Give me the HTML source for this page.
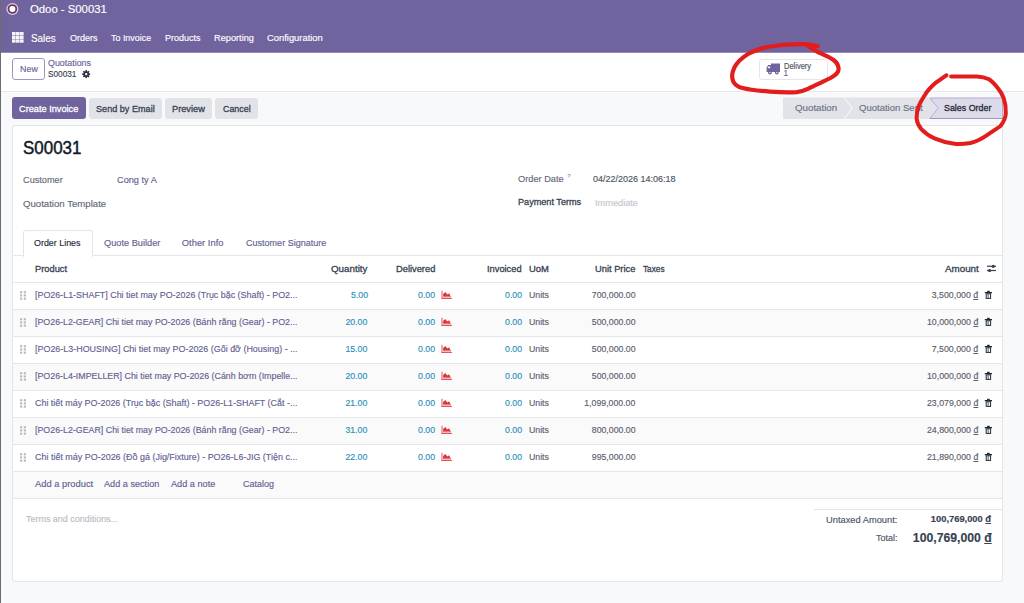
<!DOCTYPE html>
<html><head><meta charset="utf-8">
<style>
html,body{margin:0;padding:0;}
body{width:1024px;height:603px;overflow:hidden;position:relative;background:#f8f9fb;font-family:"Liberation Sans",sans-serif;}
.a{position:absolute;}
.t{position:absolute;white-space:nowrap;line-height:1;-webkit-text-stroke-width:0.15px;}
.hl{position:absolute;height:1px;background:#e4e6ea;}
</style></head><body>
<!-- top bar -->
<div class="a" style="left:0;top:0;width:1024px;height:52px;background:#71639e;"></div><div class="a" style="left:0;top:52px;width:1024px;height:1px;background:#948bba;"></div>
<div class="a" style="left:0;top:0;width:1px;height:603px;background:#6c6c70;"></div>
<svg class="a" style="left:0;top:0" width="30" height="20"><circle cx="12.4" cy="9" r="6.0" fill="#ddd5e8"/><circle cx="12.4" cy="9" r="4.8" fill="#6e3a5e"/><circle cx="12.4" cy="9" r="3.0" fill="#fff"/></svg>
<svg class="a" style="left:12px;top:32px" width="12" height="11"><g fill="#f6f4f9"><rect x="0" y="0" width="3.6" height="3.3"/><rect x="4.0" y="0" width="3.6" height="3.3"/><rect x="8.0" y="0" width="3.6" height="3.3"/><rect x="0" y="3.7" width="3.6" height="3.3"/><rect x="4.0" y="3.7" width="3.6" height="3.3"/><rect x="8.0" y="3.7" width="3.6" height="3.3"/><rect x="0" y="7.4" width="3.6" height="3.3"/><rect x="4.0" y="7.4" width="3.6" height="3.3"/><rect x="8.0" y="7.4" width="3.6" height="3.3"/></g></svg>
<!-- control panel -->
<div class="a" style="left:1px;top:53px;width:1023px;height:38px;background:#ffffff;"></div>
<div class="hl" style="left:1px;top:91px;width:1023px;background:#e5e7eb;"></div>
<div class="a" style="left:12px;top:58px;width:31px;height:20px;border:1px solid #9f95c4;border-radius:3px;background:#fff;"></div>
<svg class="a" style="left:81px;top:69px" width="10" height="10" viewBox="0 0 10 10"><g transform="translate(5.2 5.1)" fill="#2d3440">
<circle r="2.9"/>
<rect x="-0.8" y="-4" width="1.6" height="8"/><rect x="-0.8" y="-4" width="1.6" height="8" transform="rotate(45)"/><rect x="-0.8" y="-4" width="1.6" height="8" transform="rotate(90)"/><rect x="-0.8" y="-4" width="1.6" height="8" transform="rotate(135)"/>
<circle r="1.2" fill="#fff"/></g></svg>
<div class="a" style="left:759px;top:58.6px;width:66.5px;height:19.4px;border:1px solid #e3e5e9;border-radius:3px;background:#fff;"></div>
<svg class="a" style="left:766px;top:63px" width="15" height="12" viewBox="0 0 15 12"><g fill="#71639e">
<rect x="5" y="0.5" width="9" height="8.5"/><path d="M0.6 9 V4.5 L2.2 2 H5.2 V9 Z"/>
<circle cx="3.9" cy="9.6" r="1.9"/><circle cx="10.8" cy="9.6" r="1.9"/></g>
<rect x="1.8" y="3.6" width="2.4" height="1.6" fill="#fff"/><circle cx="3.9" cy="9.6" r="0.7" fill="#fff"/><circle cx="10.8" cy="9.6" r="0.7" fill="#fff"/></svg>
<!-- action buttons -->
<div class="a" style="left:12px;top:97px;width:74px;height:22px;background:#71639e;border-radius:3px;"></div>
<div class="a" style="left:88.5px;top:97.5px;width:73px;height:21.5px;background:#e1e3e8;border-radius:3px;"></div>
<div class="a" style="left:165px;top:97.5px;width:47px;height:21.5px;background:#e1e3e8;border-radius:3px;"></div>
<div class="a" style="left:215px;top:97.5px;width:43px;height:21.5px;background:#e1e3e8;border-radius:3px;"></div>
<!-- status bar -->
<svg class="a" style="left:780px;top:95px" width="244" height="27" viewBox="780 95 244 27">
<path d="M783 97.5 H843.4 L851.7 108.2 L843.4 119 H783 Z" fill="#e1e3e8"/>
<path d="M844.6 97.5 H929.4 L937.6 108.2 L929.4 119 H844.6 L852.9 108.2 Z" fill="#e1e3e8"/>
<path d="M929.9 98 H1002.5 V118.5 H929.9 L938.2 108.2 Z" fill="#dddaea" stroke="#b3acd4" stroke-width="1"/><line x1="929.9" y1="118.5" x2="1002.5" y2="118.5" stroke="#9d94c6" stroke-width="1"/>
</svg>
<!-- sheet -->
<div class="a" style="left:11.5px;top:125px;width:989.5px;height:454.8px;background:#fff;border:1px solid #e3e5e9;border-radius:3px;"></div>
<!-- tabs -->
<div class="hl" style="left:13px;top:255px;width:989px;"></div>
<div class="a" style="left:23px;top:230px;width:67.5px;height:26px;border:1px solid #e3e5e9;border-bottom:none;border-radius:3px 3px 0 0;background:#fff;"></div>
<!-- table rows -->
<div class="hl" style="left:13px;top:281.5px;width:989px;"></div>
<div class="a" style="left:13px;top:309px;width:989px;height:27px;background:#fafafb;"></div>
<div class="a" style="left:13px;top:363px;width:989px;height:27px;background:#fafafb;"></div>
<div class="a" style="left:13px;top:417px;width:989px;height:27px;background:#fafafb;"></div>
<div class="a" style="left:13px;top:471px;width:989px;height:27px;background:#fafafb;"></div>
<div class="hl" style="left:13px;top:309px;width:989px;"></div>
<div class="hl" style="left:13px;top:336px;width:989px;"></div>
<div class="hl" style="left:13px;top:363px;width:989px;"></div>
<div class="hl" style="left:13px;top:390px;width:989px;"></div>
<div class="hl" style="left:13px;top:417px;width:989px;"></div>
<div class="hl" style="left:13px;top:444px;width:989px;"></div>
<div class="hl" style="left:13px;top:471px;width:989px;"></div>
<div class="hl" style="left:13px;top:498px;width:989px;"></div>
<div class="hl" style="left:814px;top:508.5px;width:188px;"></div>
<svg class="a" style="left:0;top:0" width="1024" height="603" viewBox="0 0 1024 603"><g transform="translate(20 291.0)"><g fill="#b3b7bf"><rect x="0.1" y="0.2" width="2.1" height="2.1"/><rect x="3.8" y="0.2" width="2.1" height="2.1"/><rect x="0.1" y="3.4" width="2.1" height="2.1"/><rect x="3.8" y="3.4" width="2.1" height="2.1"/><rect x="0.1" y="6.6" width="2.1" height="2.1"/><rect x="3.8" y="6.6" width="2.1" height="2.1"/></g></g>
<g transform="translate(441.5 290.8)"><g><rect x="0" y="0" width="1" height="8.2" fill="#e0555c"/><rect x="0" y="7.2" width="10.4" height="1" fill="#e0555c"/><path d="M1.6 6.4 L1.6 3.2 L3.8 1.2 L5.8 3.6 L7.6 2.4 L9.6 6.4 Z" fill="#d9363e"/><rect x="1.6" y="5.6" width="8.2" height="1" fill="#f0a0a4"/></g></g>
<g transform="translate(984.8 290.8)"><g><rect x="0" y="1.2" width="7.2" height="1.3" fill="#1f2937"/><rect x="2.3" y="0" width="2.6" height="1.4" fill="#1f2937"/><rect x="1.4" y="3" width="4.4" height="4.6" fill="none" stroke="#1f2937" stroke-width="1"/><rect x="2.9" y="3.4" width="0.8" height="3.8" fill="#374151"/><rect x="3.6" y="3.4" width="0.1" height="3.8" fill="#374151"/></g></g>
<g transform="translate(20 318.0)"><g fill="#b3b7bf"><rect x="0.1" y="0.2" width="2.1" height="2.1"/><rect x="3.8" y="0.2" width="2.1" height="2.1"/><rect x="0.1" y="3.4" width="2.1" height="2.1"/><rect x="3.8" y="3.4" width="2.1" height="2.1"/><rect x="0.1" y="6.6" width="2.1" height="2.1"/><rect x="3.8" y="6.6" width="2.1" height="2.1"/></g></g>
<g transform="translate(441.5 317.8)"><g><rect x="0" y="0" width="1" height="8.2" fill="#e0555c"/><rect x="0" y="7.2" width="10.4" height="1" fill="#e0555c"/><path d="M1.6 6.4 L1.6 3.2 L3.8 1.2 L5.8 3.6 L7.6 2.4 L9.6 6.4 Z" fill="#d9363e"/><rect x="1.6" y="5.6" width="8.2" height="1" fill="#f0a0a4"/></g></g>
<g transform="translate(984.8 317.8)"><g><rect x="0" y="1.2" width="7.2" height="1.3" fill="#1f2937"/><rect x="2.3" y="0" width="2.6" height="1.4" fill="#1f2937"/><rect x="1.4" y="3" width="4.4" height="4.6" fill="none" stroke="#1f2937" stroke-width="1"/><rect x="2.9" y="3.4" width="0.8" height="3.8" fill="#374151"/><rect x="3.6" y="3.4" width="0.1" height="3.8" fill="#374151"/></g></g>
<g transform="translate(20 345.0)"><g fill="#b3b7bf"><rect x="0.1" y="0.2" width="2.1" height="2.1"/><rect x="3.8" y="0.2" width="2.1" height="2.1"/><rect x="0.1" y="3.4" width="2.1" height="2.1"/><rect x="3.8" y="3.4" width="2.1" height="2.1"/><rect x="0.1" y="6.6" width="2.1" height="2.1"/><rect x="3.8" y="6.6" width="2.1" height="2.1"/></g></g>
<g transform="translate(441.5 344.8)"><g><rect x="0" y="0" width="1" height="8.2" fill="#e0555c"/><rect x="0" y="7.2" width="10.4" height="1" fill="#e0555c"/><path d="M1.6 6.4 L1.6 3.2 L3.8 1.2 L5.8 3.6 L7.6 2.4 L9.6 6.4 Z" fill="#d9363e"/><rect x="1.6" y="5.6" width="8.2" height="1" fill="#f0a0a4"/></g></g>
<g transform="translate(984.8 344.8)"><g><rect x="0" y="1.2" width="7.2" height="1.3" fill="#1f2937"/><rect x="2.3" y="0" width="2.6" height="1.4" fill="#1f2937"/><rect x="1.4" y="3" width="4.4" height="4.6" fill="none" stroke="#1f2937" stroke-width="1"/><rect x="2.9" y="3.4" width="0.8" height="3.8" fill="#374151"/><rect x="3.6" y="3.4" width="0.1" height="3.8" fill="#374151"/></g></g>
<g transform="translate(20 372.0)"><g fill="#b3b7bf"><rect x="0.1" y="0.2" width="2.1" height="2.1"/><rect x="3.8" y="0.2" width="2.1" height="2.1"/><rect x="0.1" y="3.4" width="2.1" height="2.1"/><rect x="3.8" y="3.4" width="2.1" height="2.1"/><rect x="0.1" y="6.6" width="2.1" height="2.1"/><rect x="3.8" y="6.6" width="2.1" height="2.1"/></g></g>
<g transform="translate(441.5 371.8)"><g><rect x="0" y="0" width="1" height="8.2" fill="#e0555c"/><rect x="0" y="7.2" width="10.4" height="1" fill="#e0555c"/><path d="M1.6 6.4 L1.6 3.2 L3.8 1.2 L5.8 3.6 L7.6 2.4 L9.6 6.4 Z" fill="#d9363e"/><rect x="1.6" y="5.6" width="8.2" height="1" fill="#f0a0a4"/></g></g>
<g transform="translate(984.8 371.8)"><g><rect x="0" y="1.2" width="7.2" height="1.3" fill="#1f2937"/><rect x="2.3" y="0" width="2.6" height="1.4" fill="#1f2937"/><rect x="1.4" y="3" width="4.4" height="4.6" fill="none" stroke="#1f2937" stroke-width="1"/><rect x="2.9" y="3.4" width="0.8" height="3.8" fill="#374151"/><rect x="3.6" y="3.4" width="0.1" height="3.8" fill="#374151"/></g></g>
<g transform="translate(20 399.0)"><g fill="#b3b7bf"><rect x="0.1" y="0.2" width="2.1" height="2.1"/><rect x="3.8" y="0.2" width="2.1" height="2.1"/><rect x="0.1" y="3.4" width="2.1" height="2.1"/><rect x="3.8" y="3.4" width="2.1" height="2.1"/><rect x="0.1" y="6.6" width="2.1" height="2.1"/><rect x="3.8" y="6.6" width="2.1" height="2.1"/></g></g>
<g transform="translate(441.5 398.8)"><g><rect x="0" y="0" width="1" height="8.2" fill="#e0555c"/><rect x="0" y="7.2" width="10.4" height="1" fill="#e0555c"/><path d="M1.6 6.4 L1.6 3.2 L3.8 1.2 L5.8 3.6 L7.6 2.4 L9.6 6.4 Z" fill="#d9363e"/><rect x="1.6" y="5.6" width="8.2" height="1" fill="#f0a0a4"/></g></g>
<g transform="translate(984.8 398.8)"><g><rect x="0" y="1.2" width="7.2" height="1.3" fill="#1f2937"/><rect x="2.3" y="0" width="2.6" height="1.4" fill="#1f2937"/><rect x="1.4" y="3" width="4.4" height="4.6" fill="none" stroke="#1f2937" stroke-width="1"/><rect x="2.9" y="3.4" width="0.8" height="3.8" fill="#374151"/><rect x="3.6" y="3.4" width="0.1" height="3.8" fill="#374151"/></g></g>
<g transform="translate(20 426.0)"><g fill="#b3b7bf"><rect x="0.1" y="0.2" width="2.1" height="2.1"/><rect x="3.8" y="0.2" width="2.1" height="2.1"/><rect x="0.1" y="3.4" width="2.1" height="2.1"/><rect x="3.8" y="3.4" width="2.1" height="2.1"/><rect x="0.1" y="6.6" width="2.1" height="2.1"/><rect x="3.8" y="6.6" width="2.1" height="2.1"/></g></g>
<g transform="translate(441.5 425.8)"><g><rect x="0" y="0" width="1" height="8.2" fill="#e0555c"/><rect x="0" y="7.2" width="10.4" height="1" fill="#e0555c"/><path d="M1.6 6.4 L1.6 3.2 L3.8 1.2 L5.8 3.6 L7.6 2.4 L9.6 6.4 Z" fill="#d9363e"/><rect x="1.6" y="5.6" width="8.2" height="1" fill="#f0a0a4"/></g></g>
<g transform="translate(984.8 425.8)"><g><rect x="0" y="1.2" width="7.2" height="1.3" fill="#1f2937"/><rect x="2.3" y="0" width="2.6" height="1.4" fill="#1f2937"/><rect x="1.4" y="3" width="4.4" height="4.6" fill="none" stroke="#1f2937" stroke-width="1"/><rect x="2.9" y="3.4" width="0.8" height="3.8" fill="#374151"/><rect x="3.6" y="3.4" width="0.1" height="3.8" fill="#374151"/></g></g>
<g transform="translate(20 453.0)"><g fill="#b3b7bf"><rect x="0.1" y="0.2" width="2.1" height="2.1"/><rect x="3.8" y="0.2" width="2.1" height="2.1"/><rect x="0.1" y="3.4" width="2.1" height="2.1"/><rect x="3.8" y="3.4" width="2.1" height="2.1"/><rect x="0.1" y="6.6" width="2.1" height="2.1"/><rect x="3.8" y="6.6" width="2.1" height="2.1"/></g></g>
<g transform="translate(441.5 452.8)"><g><rect x="0" y="0" width="1" height="8.2" fill="#e0555c"/><rect x="0" y="7.2" width="10.4" height="1" fill="#e0555c"/><path d="M1.6 6.4 L1.6 3.2 L3.8 1.2 L5.8 3.6 L7.6 2.4 L9.6 6.4 Z" fill="#d9363e"/><rect x="1.6" y="5.6" width="8.2" height="1" fill="#f0a0a4"/></g></g>
<g transform="translate(984.8 452.8)"><g><rect x="0" y="1.2" width="7.2" height="1.3" fill="#1f2937"/><rect x="2.3" y="0" width="2.6" height="1.4" fill="#1f2937"/><rect x="1.4" y="3" width="4.4" height="4.6" fill="none" stroke="#1f2937" stroke-width="1"/><rect x="2.9" y="3.4" width="0.8" height="3.8" fill="#374151"/><rect x="3.6" y="3.4" width="0.1" height="3.8" fill="#374151"/></g></g>
<g stroke="#374151" stroke-width="1.2"><line x1="987" y1="266.3" x2="996" y2="266.3"/><line x1="987" y1="270.5" x2="996" y2="270.5"/></g>
<circle cx="993.2" cy="266.3" r="1.6" fill="#374151"/><circle cx="989.6" cy="270.5" r="1.6" fill="#374151"/>
</svg>
<div class="t" style="top:3.55px;font-size:11.4px;color:#ffffff;left:30.4px;transform:scaleX(0.994);transform-origin:0 0;">Odoo - S00031</div>
<div class="t" style="top:33.87px;font-size:10.2px;color:#ffffff;left:31.4px;transform:scaleX(0.965);transform-origin:0 0;">Sales</div>
<div class="t" style="top:33.93px;font-size:9.3px;color:#ffffff;left:69.6px;transform:scaleX(0.971);transform-origin:0 0;">Orders</div>
<div class="t" style="top:33.93px;font-size:9.3px;color:#ffffff;left:110.9px;transform:scaleX(0.958);transform-origin:0 0;">To Invoice</div>
<div class="t" style="top:33.93px;font-size:9.3px;color:#ffffff;left:164.8px;transform:scaleX(0.968);transform-origin:0 0;">Products</div>
<div class="t" style="top:33.93px;font-size:9.3px;color:#ffffff;left:213.7px;transform:scaleX(0.990);transform-origin:0 0;">Reporting</div>
<div class="t" style="top:33.93px;font-size:9.3px;color:#ffffff;left:267.3px;transform:scaleX(1.009);transform-origin:0 0;">Configuration</div>
<div class="t" style="top:65.38px;font-size:9px;color:#71639e;left:19.5px;transform:scaleX(0.989);transform-origin:0 0;">New</div>
<div class="t" style="top:59.09px;font-size:8.4px;color:#71639e;left:48px;transform:scaleX(1.062);transform-origin:0 0;">Quotations</div>
<div class="t" style="top:69.78px;font-size:9px;color:#374151;left:48px;transform:scaleX(0.915);transform-origin:0 0;">S00031</div>
<div class="t" style="top:62.76px;font-size:8.2px;color:#4b5563;left:784.1px;transform:scaleX(0.916);transform-origin:0 0;">Delivery</div>
<div class="t" style="top:70.36px;font-size:8.2px;color:#71639e;left:783.6px;">1</div>
<div class="t" style="top:103.54px;font-size:9.4px;color:#ffffff;-webkit-text-stroke:0.3px #ffffff;left:19.2px;transform:scaleX(0.981);transform-origin:0 0;">Create Invoice</div>
<div class="t" style="top:103.54px;font-size:9.4px;color:#374151;-webkit-text-stroke:0.3px #374151;left:96px;transform:scaleX(0.971);transform-origin:0 0;">Send by Email</div>
<div class="t" style="top:103.54px;font-size:9.4px;color:#374151;-webkit-text-stroke:0.3px #374151;left:172.2px;transform:scaleX(0.984);transform-origin:0 0;">Preview</div>
<div class="t" style="top:103.54px;font-size:9.4px;color:#374151;-webkit-text-stroke:0.3px #374151;left:222.5px;transform:scaleX(0.946);transform-origin:0 0;">Cancel</div>
<div class="t" style="top:103.24px;font-size:9.4px;color:#6b7280;left:795px;transform:scaleX(1.038);transform-origin:0 0;">Quotation</div>
<div class="t" style="top:103.24px;font-size:9.4px;color:#6b7280;left:859px;transform:scaleX(1.017);transform-origin:0 0;">Quotation Sent</div>
<div class="t" style="top:102.94px;font-size:9.4px;color:#1f2937;-webkit-text-stroke:0.3px #1f2937;left:944.3px;transform:scaleX(0.948);transform-origin:0 0;">Sales Order</div>
<div class="t" style="top:140.1px;font-size:17.6px;color:#111827;left:22.9px;transform:scaleX(0.963);transform-origin:0 0;-webkit-text-stroke-width:0.45px;">S00031</div>
<div class="t" style="top:174.74px;font-size:9.4px;color:#646a77;left:22.9px;transform:scaleX(0.979);transform-origin:0 0;">Customer</div>
<div class="t" style="top:174.74px;font-size:9.4px;color:#645f91;left:117px;transform:scaleX(0.981);transform-origin:0 0;">Cong ty A</div>
<div class="t" style="top:198.64px;font-size:9.4px;color:#646a77;left:22.9px;transform:scaleX(1.025);transform-origin:0 0;">Quotation Template</div>
<div class="t" style="top:174.44px;font-size:9.4px;color:#646a77;left:518.4px;transform:scaleX(0.986);transform-origin:0 0;">Order Date</div>
<div class="t" style="top:173.54px;font-size:5.5px;color:#8a8f99;left:567.6px;">?</div>
<div class="t" style="top:174.44px;font-size:9.4px;color:#4b5563;left:593px;transform:scaleX(0.960);transform-origin:0 0;">04/22/2026 14:06:18</div>
<div class="t" style="top:197.91px;font-size:9.2px;color:#374151;-webkit-text-stroke:0.3px #374151;left:518.4px;transform:scaleX(0.992);transform-origin:0 0;">Payment Terms</div>
<div class="t" style="top:197.84px;font-size:9.4px;color:#c3c7cf;left:595.3px;transform:scaleX(0.982);transform-origin:0 0;">Immediate</div>
<div class="t" style="top:238.04px;font-size:9.4px;color:#1f2937;left:34.4px;transform:scaleX(0.949);transform-origin:0 0;">Order Lines</div>
<div class="t" style="top:238.04px;font-size:9.4px;color:#645f91;left:103.5px;transform:scaleX(0.984);transform-origin:0 0;">Quote Builder</div>
<div class="t" style="top:238.04px;font-size:9.4px;color:#645f91;left:181.8px;">Other Info</div>
<div class="t" style="top:238.04px;font-size:9.4px;color:#645f91;left:246.2px;transform:scaleX(0.963);transform-origin:0 0;">Customer Signature</div>
<div class="t" style="top:264.51px;font-size:9.2px;color:#374151;-webkit-text-stroke:0.3px #374151;left:35px;transform:scaleX(1.014);transform-origin:0 0;">Product</div>
<div class="t" style="top:264.51px;font-size:9.2px;color:#374151;-webkit-text-stroke:0.3px #374151;left:331.2px;transform:scaleX(1.064);transform-origin:0 0;">Quantity</div>
<div class="t" style="top:264.51px;font-size:9.2px;color:#374151;-webkit-text-stroke:0.3px #374151;left:395.5px;transform:scaleX(1.013);transform-origin:0 0;">Delivered</div>
<div class="t" style="top:264.51px;font-size:9.2px;color:#374151;-webkit-text-stroke:0.3px #374151;left:486.9px;transform:scaleX(1.011);transform-origin:0 0;">Invoiced</div>
<div class="t" style="top:264.51px;font-size:9.2px;color:#374151;-webkit-text-stroke:0.3px #374151;left:528.6px;transform:scaleX(1.026);transform-origin:0 0;">UoM</div>
<div class="t" style="top:264.51px;font-size:9.2px;color:#374151;-webkit-text-stroke:0.3px #374151;left:595.2px;transform:scaleX(1.014);transform-origin:0 0;">Unit Price</div>
<div class="t" style="top:264.51px;font-size:9.2px;color:#374151;-webkit-text-stroke:0.3px #374151;left:642.6px;transform:scaleX(0.896);transform-origin:0 0;">Taxes</div>
<div class="t" style="top:264.51px;font-size:9.2px;color:#374151;-webkit-text-stroke:0.3px #374151;left:944.6px;transform:scaleX(1.067);transform-origin:0 0;">Amount</div>
<div class="t" style="top:290.73px;font-size:9.3px;color:#645f91;left:35px;transform:scaleX(0.958);transform-origin:0 0;">[PO26-L1-SHAFT] Chi tiet may PO-2026 (Trục bặc (Shaft) - PO2...</div>
<div class="t" style="top:290.73px;font-size:9.3px;color:#2a8fbb;right:656.4px;transform:scaleX(0.940);transform-origin:100% 0;">5.00</div>
<div class="t" style="top:290.73px;font-size:9.3px;color:#2a8fbb;right:589.2px;transform:scaleX(0.940);transform-origin:100% 0;">0.00</div>
<div class="t" style="top:290.73px;font-size:9.3px;color:#2a8fbb;right:501.9px;transform:scaleX(0.940);transform-origin:100% 0;">0.00</div>
<div class="t" style="top:290.73px;font-size:9.3px;color:#5a606c;left:528.6px;transform:scaleX(0.940);transform-origin:0 0;">Units</div>
<div class="t" style="top:290.73px;font-size:9.3px;color:#5a606c;right:388.4px;transform:scaleX(0.940);transform-origin:100% 0;">700,000.00</div>
<div class="t" style="top:290.73px;font-size:9.3px;color:#5a606c;right:45.8px;transform:scaleX(0.945);transform-origin:100% 0;">3,500,000 <u>đ</u></div>
<div class="t" style="top:317.73px;font-size:9.3px;color:#645f91;left:35px;transform:scaleX(0.951);transform-origin:0 0;">[PO26-L2-GEAR] Chi tiet may PO-2026 (Bánh răng (Gear) - PO2...</div>
<div class="t" style="top:317.73px;font-size:9.3px;color:#2a8fbb;right:656.4px;transform:scaleX(0.940);transform-origin:100% 0;">20.00</div>
<div class="t" style="top:317.73px;font-size:9.3px;color:#2a8fbb;right:589.2px;transform:scaleX(0.940);transform-origin:100% 0;">0.00</div>
<div class="t" style="top:317.73px;font-size:9.3px;color:#2a8fbb;right:501.9px;transform:scaleX(0.940);transform-origin:100% 0;">0.00</div>
<div class="t" style="top:317.73px;font-size:9.3px;color:#5a606c;left:528.6px;transform:scaleX(0.940);transform-origin:0 0;">Units</div>
<div class="t" style="top:317.73px;font-size:9.3px;color:#5a606c;right:388.4px;transform:scaleX(0.940);transform-origin:100% 0;">500,000.00</div>
<div class="t" style="top:317.73px;font-size:9.3px;color:#5a606c;right:45.8px;transform:scaleX(0.945);transform-origin:100% 0;">10,000,000 <u>đ</u></div>
<div class="t" style="top:344.73px;font-size:9.3px;color:#645f91;left:35px;transform:scaleX(0.961);transform-origin:0 0;">[PO26-L3-HOUSING] Chi tiet may PO-2026 (Gối đỡ (Housing) - ...</div>
<div class="t" style="top:344.73px;font-size:9.3px;color:#2a8fbb;right:656.4px;transform:scaleX(0.940);transform-origin:100% 0;">15.00</div>
<div class="t" style="top:344.73px;font-size:9.3px;color:#2a8fbb;right:589.2px;transform:scaleX(0.940);transform-origin:100% 0;">0.00</div>
<div class="t" style="top:344.73px;font-size:9.3px;color:#2a8fbb;right:501.9px;transform:scaleX(0.940);transform-origin:100% 0;">0.00</div>
<div class="t" style="top:344.73px;font-size:9.3px;color:#5a606c;left:528.6px;transform:scaleX(0.940);transform-origin:0 0;">Units</div>
<div class="t" style="top:344.73px;font-size:9.3px;color:#5a606c;right:388.4px;transform:scaleX(0.940);transform-origin:100% 0;">500,000.00</div>
<div class="t" style="top:344.73px;font-size:9.3px;color:#5a606c;right:45.8px;transform:scaleX(0.945);transform-origin:100% 0;">7,500,000 <u>đ</u></div>
<div class="t" style="top:371.73px;font-size:9.3px;color:#645f91;left:35px;transform:scaleX(0.952);transform-origin:0 0;">[PO26-L4-IMPELLER] Chi tiet may PO-2026 (Cánh bơm (Impelle...</div>
<div class="t" style="top:371.73px;font-size:9.3px;color:#2a8fbb;right:656.4px;transform:scaleX(0.940);transform-origin:100% 0;">20.00</div>
<div class="t" style="top:371.73px;font-size:9.3px;color:#2a8fbb;right:589.2px;transform:scaleX(0.940);transform-origin:100% 0;">0.00</div>
<div class="t" style="top:371.73px;font-size:9.3px;color:#2a8fbb;right:501.9px;transform:scaleX(0.940);transform-origin:100% 0;">0.00</div>
<div class="t" style="top:371.73px;font-size:9.3px;color:#5a606c;left:528.6px;transform:scaleX(0.940);transform-origin:0 0;">Units</div>
<div class="t" style="top:371.73px;font-size:9.3px;color:#5a606c;right:388.4px;transform:scaleX(0.940);transform-origin:100% 0;">500,000.00</div>
<div class="t" style="top:371.73px;font-size:9.3px;color:#5a606c;right:45.8px;transform:scaleX(0.945);transform-origin:100% 0;">10,000,000 <u>đ</u></div>
<div class="t" style="top:398.73px;font-size:9.3px;color:#645f91;left:35px;transform:scaleX(0.960);transform-origin:0 0;">Chi tiết máy PO-2026 (Trục bặc (Shaft) - PO26-L1-SHAFT (Cắt -...</div>
<div class="t" style="top:398.73px;font-size:9.3px;color:#2a8fbb;right:656.4px;transform:scaleX(0.940);transform-origin:100% 0;">21.00</div>
<div class="t" style="top:398.73px;font-size:9.3px;color:#2a8fbb;right:589.2px;transform:scaleX(0.940);transform-origin:100% 0;">0.00</div>
<div class="t" style="top:398.73px;font-size:9.3px;color:#2a8fbb;right:501.9px;transform:scaleX(0.940);transform-origin:100% 0;">0.00</div>
<div class="t" style="top:398.73px;font-size:9.3px;color:#5a606c;left:528.6px;transform:scaleX(0.940);transform-origin:0 0;">Units</div>
<div class="t" style="top:398.73px;font-size:9.3px;color:#5a606c;right:388.4px;transform:scaleX(0.940);transform-origin:100% 0;">1,099,000.00</div>
<div class="t" style="top:398.73px;font-size:9.3px;color:#5a606c;right:45.8px;transform:scaleX(0.945);transform-origin:100% 0;">23,079,000 <u>đ</u></div>
<div class="t" style="top:425.73px;font-size:9.3px;color:#645f91;left:35px;transform:scaleX(0.951);transform-origin:0 0;">[PO26-L2-GEAR] Chi tiet may PO-2026 (Bánh răng (Gear) - PO2...</div>
<div class="t" style="top:425.73px;font-size:9.3px;color:#2a8fbb;right:656.4px;transform:scaleX(0.940);transform-origin:100% 0;">31.00</div>
<div class="t" style="top:425.73px;font-size:9.3px;color:#2a8fbb;right:589.2px;transform:scaleX(0.940);transform-origin:100% 0;">0.00</div>
<div class="t" style="top:425.73px;font-size:9.3px;color:#2a8fbb;right:501.9px;transform:scaleX(0.940);transform-origin:100% 0;">0.00</div>
<div class="t" style="top:425.73px;font-size:9.3px;color:#5a606c;left:528.6px;transform:scaleX(0.940);transform-origin:0 0;">Units</div>
<div class="t" style="top:425.73px;font-size:9.3px;color:#5a606c;right:388.4px;transform:scaleX(0.940);transform-origin:100% 0;">800,000.00</div>
<div class="t" style="top:425.73px;font-size:9.3px;color:#5a606c;right:45.8px;transform:scaleX(0.945);transform-origin:100% 0;">24,800,000 <u>đ</u></div>
<div class="t" style="top:452.73px;font-size:9.3px;color:#645f91;left:35px;transform:scaleX(0.963);transform-origin:0 0;">Chi tiết máy PO-2026 (Đồ gá (Jig/Fixture) - PO26-L6-JIG (Tiện c...</div>
<div class="t" style="top:452.73px;font-size:9.3px;color:#2a8fbb;right:656.4px;transform:scaleX(0.940);transform-origin:100% 0;">22.00</div>
<div class="t" style="top:452.73px;font-size:9.3px;color:#2a8fbb;right:589.2px;transform:scaleX(0.940);transform-origin:100% 0;">0.00</div>
<div class="t" style="top:452.73px;font-size:9.3px;color:#2a8fbb;right:501.9px;transform:scaleX(0.940);transform-origin:100% 0;">0.00</div>
<div class="t" style="top:452.73px;font-size:9.3px;color:#5a606c;left:528.6px;transform:scaleX(0.940);transform-origin:0 0;">Units</div>
<div class="t" style="top:452.73px;font-size:9.3px;color:#5a606c;right:388.4px;transform:scaleX(0.940);transform-origin:100% 0;">995,000.00</div>
<div class="t" style="top:452.73px;font-size:9.3px;color:#5a606c;right:45.8px;transform:scaleX(0.945);transform-origin:100% 0;">21,890,000 <u>đ</u></div>
<div class="t" style="top:479.93px;font-size:9.3px;color:#645f91;left:35.2px;transform:scaleX(1.005);transform-origin:0 0;">Add a product</div>
<div class="t" style="top:479.93px;font-size:9.3px;color:#645f91;left:104.3px;transform:scaleX(0.982);transform-origin:0 0;">Add a section</div>
<div class="t" style="top:479.93px;font-size:9.3px;color:#645f91;left:170.8px;transform:scaleX(0.985);transform-origin:0 0;">Add a note</div>
<div class="t" style="top:479.93px;font-size:9.3px;color:#645f91;left:243px;transform:scaleX(0.964);transform-origin:0 0;">Catalog</div>
<div class="t" style="top:515.13px;font-size:9.3px;color:#b8bcc4;left:25.9px;transform:scaleX(0.963);transform-origin:0 0;">Terms and conditions...</div>
<div class="t" style="top:516.13px;font-size:9.3px;color:#4b5563;left:826px;">Untaxed Amount:</div>
<div class="t" style="top:515.38px;font-size:9px;color:#374151;font-weight:bold;right:32.7px;transform:scaleX(1.037);transform-origin:100% 0;">100,769,000 <u>đ</u></div>
<div class="t" style="top:534.13px;font-size:9.3px;color:#4b5563;left:876px;transform:scaleX(0.968);transform-origin:0 0;">Total:</div>
<div class="t" style="top:530.99px;font-size:13.6px;color:#374151;font-weight:bold;right:32.7px;transform:scaleX(0.899);transform-origin:100% 0;">100,769,000 <u>đ</u></div>
<!-- annotations -->
<svg class="a" style="left:0;top:0" width="1024" height="603" viewBox="0 0 1024 603">
<path d="M817.7 46.2 C812 44.6 806 44.2 800.2 44.2 C792 44.2 782.6 44.6 775 46 C764 47 755.5 49.8 748.5 53.8 C742 57.6 737 62.5 734.2 67.8 C732 72.5 731.6 77.5 733.2 81.4 C735.2 85 738.5 87 742.5 88 C749 89.6 759.2 90.8 770 91.6 C780.3 92.4 790 92.6 796.7 92.1 C801.5 91.6 805 90.2 808.4 88.6 C815 85.2 823.6 81.6 830.5 78 C835 75.5 838.6 73 838.6 69.2 C838.6 65.2 836.5 62.2 833.6 60 C830 57.2 823.6 54.6 818 52 C814 50 811 48 808 46" fill="none" stroke="#e31c1c" stroke-width="4.2" stroke-linecap="round" stroke-linejoin="round"/>
<path d="M946.5 75.3 C941.5 78.5 938 81.6 935.9 82.6 C931 87 927.5 90.5 925.2 94.5 C922 99.5 919.8 103 918.6 106.5 C917 111 916.4 115 916.6 118.4 C917 122.5 918.6 126 921.3 129.1 C925 133 929 136 934.5 138.4 C941 141.2 947.5 143 954.4 143.7 C960 144.2 965 143.8 970.4 143 C976 141.8 981.5 139 986.3 135.7 C991.5 132 996.5 129 1000.5 126 C1004 121.5 1005.6 117.5 1005.8 113.5 C1006 108 1005.2 102.6 1003.8 98.5 C1002.4 94.5 1000.4 91 998 88.3 C995 84.6 992.5 81.5 989 79.3 C985 77.5 981 76.8 977 76.6 C972 76.4 966 76.6 961 76.6 C957 76.6 954 76.6 951.1 76.6" fill="none" stroke="#e31c1c" stroke-width="4" stroke-linecap="round" stroke-linejoin="round"/>
</svg>
</body></html>
